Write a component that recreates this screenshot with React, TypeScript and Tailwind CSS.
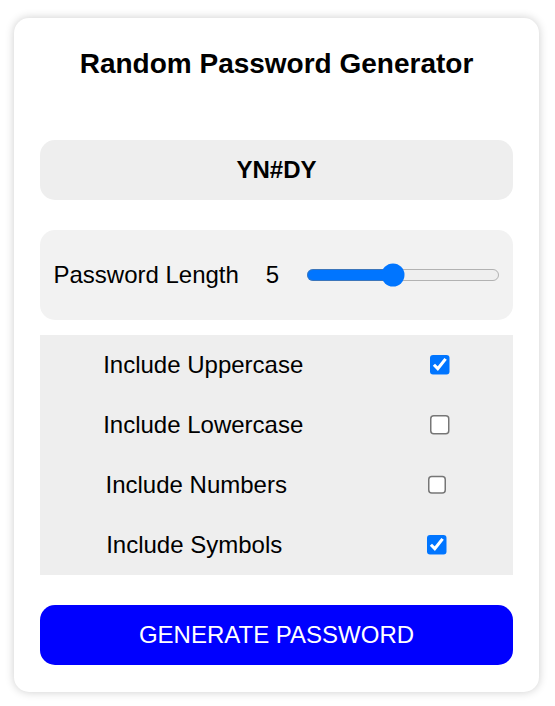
import { useState } from "react";

const options = [
  { key: "upper", label: "Include Uppercase" },
  { key: "lower", label: "Include Lowercase" },
  { key: "numbers", label: "Include Numbers" },
  { key: "symbols", label: "Include Symbols" },
];

export default function App() {
  const [length, setLength] = useState(5);
  const [checked, setChecked] = useState<Record<string, boolean>>({
    upper: true,
    lower: false,
    numbers: false,
    symbols: true,
  });

  return (
    <div className="min-h-screen bg-white pt-[18px] px-[14px] font-['Liberation_Sans',Arial,sans-serif] text-black">
      <div className="w-[525px] rounded-[15px] bg-white px-[26px] pt-[30px] pb-[27px] shadow-[0_0_10px_rgba(0,0,0,0.2)]">
        <h3 className="text-center text-[28px] font-bold leading-[32px]">
          Random Password Generator
        </h3>

        <div className="mt-[60px] flex h-[60px] items-center justify-center rounded-[15px] bg-[#eeeeee] text-[24px] font-bold">
          YN#DY
        </div>

        <div className="mt-[30px] flex h-[90px] items-center justify-around rounded-[15px] bg-[#f2f2f2] text-[24px]">
          <span>Password Length</span>
          <span>{length}</span>
          <input
            type="range"
            min={1}
            max={10}
            value={length}
            onChange={(e) => setLength(Number(e.target.value))}
            className="m-0 [zoom:1.5]"
          />
        </div>

        <div className="mt-[15px] bg-[#eeeeee] text-[24px]">
          {options.map((o) => (
            <div key={o.key} className="flex h-[60px] items-center justify-around px-[42px]">
              <label htmlFor={o.key}>{o.label}</label>
              <span />
              <span />
              <input
                id={o.key}
                type="checkbox"
                checked={checked[o.key]}
                onChange={() => setChecked({ ...checked, [o.key]: !checked[o.key] })}
                className="m-0 [zoom:1.5]"
              />
            </div>
          ))}
        </div>

        <button className="mt-[30px] flex h-[60px] w-full items-center justify-center rounded-[15px] bg-[#0000ff] text-[24px] text-white">
          GENERATE PASSWORD
        </button>
      </div>
    </div>
  );
}
